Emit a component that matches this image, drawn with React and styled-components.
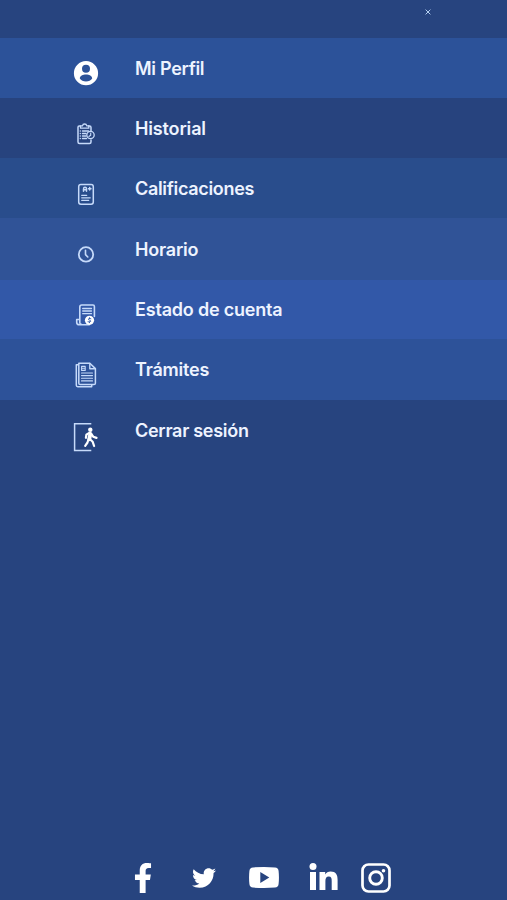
import React from 'react';
import styled, { createGlobalStyle } from 'styled-components';
import { FaFacebookF, FaTwitter } from 'react-icons/fa';


const GlobalStyle = createGlobalStyle`
  body {
    margin: 0;
    background: #27447f;
  }
`;

const Screen = styled.div`
  background: #27447f;
  box-sizing: border-box;
  color: #edf3ff;
  display: flex;
  flex-direction: column;
  font-family: Inter, 'Liberation Sans', sans-serif;
  height: 900px;
  overflow: hidden;
  width: 507px;
`;

const Header = styled.header`
  display: flex;
  flex: none;
  height: 38px;
  justify-content: flex-end;
`;

const CloseButton = styled.button`
  background: none;
  border: none;
  color: #b5cff0;
  height: 6px;
  line-height: 0;
  margin: 9px 76px 0 0;
  padding: 0;
  width: 6px;
`;

const Menu = styled.nav`
  flex: 1;
`;

const MenuItem = styled.a`
  align-items: flex-start;
  background: ${props => props.$color};
  box-sizing: border-box;
  display: flex;
  height: ${props => props.$height}px;
  padding: ${props => props.$top}px 0 0 70px;
`;

const ItemIcon = styled.svg`
  fill: none;
  flex: none;
  height: 32px;
  stroke: #c6dafa;
  stroke-linecap: round;
  stroke-linejoin: round;
  stroke-width: 1.5;
  width: 32px;
`;

const Label = styled.span`
  font-size: 18px;
  font-weight: 600;
  letter-spacing: ${props => props.$spacing}px;
  line-height: 22px;
  margin: ${props => props.$drop}px 0 0 33px;
  white-space: nowrap;
`;

const Footer = styled.footer`
  align-items: center;
  color: #fff;
  display: flex;
  height: 30px;
  margin-bottom: 7px;
  padding-left: 134px;
`;

const SocialLink = styled.a`
  display: flex;
  flex: none;
  justify-content: center;
  margin-right: ${props => props.$gap || 0}px;
  padding-bottom: ${props => props.$lift || 0}px;
  width: ${props => props.$width}px;
  svg {
    flex: none;
  }
`;

const ProfileIcon = () => (
  <ItemIcon viewBox='0 0 32 32'>
    <path
      fill='#fff'
      stroke='none'
      fillRule='evenodd'
      d='M16 4.1a12.1 12.1 0 1 0 0 24.2a12.1 12.1 0 1 0 0-24.2zM16 7.7a4 4 0 1 1 0 8a4 4 0 1 1 0-8zM9.8 21.4c0-2.6 3.2-3.9 6.2-3.9s6.2 1.3 6.2 3.9c-1.3 1.8-3.5 3-6.2 3s-4.9-1.2-6.2-3z'
    />
  </ItemIcon>
);

const HistoryIcon = () => (
  <ItemIcon viewBox='0 0 32 32'>
    <path d='M10.5 9H9.2Q8 9 8 10.3v14.6q0 1.5 1.5 1.5h10q1.5 0 1.5-1.5v-2M21 14v-3.5Q21 9 19.5 9h-1' />
    <path d='M10.5 11.2V8.8h2Q12.8 7 14.6 7t2.2 1.8h2v2.4z' strokeWidth='1.3' />
    <path d='M12.5 14h6M12.5 16.5h3.5M12.5 19h3.5M12.5 21.5h4M10.3 14v.1M10.3 16.5v.1M10.3 19v.1M10.3 21.5v.1' strokeWidth='1.4' />
    <circle cx='20.5' cy='18' r='3.7' strokeWidth='1.3' />
    <path d='M20.7 16v2.2l-1.8 1.3' strokeWidth='1.1' />
  </ItemIcon>
);

const GradesIcon = () => (
  <ItemIcon viewBox='0 0 32 32'>
    <rect x='8.7' y='6.5' width='14.6' height='19.7' rx='2.2' />
    <path d='M13.5 13.2V11q0-1.7 1.5-1.7t1.5 1.7v2.2M13.5 11.7h3M18.4 10.7h2.6M19.7 9.4v2.6' />
    <path d='M11.7 17.3h5M11.7 19.8h8.5M11.7 22.3h7' strokeWidth='1.3' />
  </ItemIcon>
);

const ClockIcon = () => (
  <ItemIcon viewBox='0 0 32 32'>
    <circle cx='16' cy='16.4' r='7.2' strokeWidth='1.8' />
    <path d='M15.5 12.3v4.3l2.3 2.4' strokeWidth='1.6' />
  </ItemIcon>
);

const AccountIcon = () => (
  <ItemIcon viewBox='0 0 32 32'>
    <path d='M9.8 20.5V8q0-2 2-2H23q1.4 0 1.4 1.5v10M9.8 20.5H6.7v2.7q0 2.6 2.6 2.6h10M9.8 20.5v3.3q0 1.6 1.5 1.6' strokeWidth='1.6' />
    <path d='M12.7 9.5h8.8M12.7 12h8.8M12.7 14.7h8.8' strokeWidth='1.3' />
    <circle cx='19.5' cy='21.3' r='4.6' fill='#fff' stroke='none' />
    <path d='M20.9 19.7q-2.6-.9-2.6.4c0 1.3 2.5.8 2.5 2.1q0 1.4-2.8.6M19.5 18.7v.8M19.5 22.9v.8' stroke='#3258a8' strokeWidth='.9' />
  </ItemIcon>
);

const PaperworkIcon = () => (
  <ItemIcon viewBox='0 0 32 32'>
    <path d='M8 5.8H6.3v20.5q0 1.4 1.4 1.4h14v-1.9' />
    <path d='M8.8 4.2h11l5.6 5.4v14.6q0 1.4-1.4 1.4H10.2q-1.4 0-1.4-1.4z' />
    <path d='M19.8 4.4v5.3h5.4' strokeWidth='1.4' />
    <path d='M11.6 7.4h3.6v4h-3.6zM12.5 9.3h1.8' strokeWidth='1.1' />
    <path d='M11.5 14h11M11.5 16.6h11M11.5 19.2h11M11.5 21.9h11' strokeWidth='1.1' />
  </ItemIcon>
);

const LogoutIcon = () => (
  <ItemIcon viewBox='0 0 32 32'>
    <path d='M21.3 2.7H4.6v26.7h16.7' strokeLinecap='butt' strokeLinejoin='miter' />
    <circle cx='20.3' cy='8.7' r='2.2' fill='#fff' stroke='none' />
    <path d='M20.3 13l-1 5.2' stroke='#fff' strokeWidth='3.9' />
    <path
      d='M19.3 11.8l-2.9 1.9-.5 3.1M21.3 13l1.9 2.7 3.3 1.2M19.5 17.8l3.2 3 1.4 4.2M18.4 18.5l-.9 3-2.3 3.3'
      stroke='#fff'
      strokeWidth='2.2'
    />
  </ItemIcon>
);

const YoutubeIcon = () => (
  <svg width='30' height='21' viewBox='0 0 30 21' fill='currentColor'>
    <path
      fillRule='evenodd'
      d='M4 .4Q15-.4 26 .4Q29.3.6 29.6 4Q30.3 10.5 29.6 17Q29.3 20.4 26 20.6Q15 21.4 4 20.6Q.7 20.4.4 17Q-.3 10.5.4 4Q.7.6 4 .4zM11.3 5v11l9-5.5z'
    />
  </svg>
);

const LinkedinIcon = () => (
  <svg width='29' height='27' viewBox='0 0 29 27' fill='currentColor'>
    <circle cx='4' cy='3.5' r='3.5' />
    <path d='M1 9h6v18H1zM10.5 9h5.7v2.5c1-1.8 2.9-2.9 5.4-2.9 5.3 0 7 3.2 7 8.3V27h-5.9v-9c0-2.6-.4-4.4-2.9-4.4-2.6 0-3.4 1.9-3.4 4.4v9h-5.9z' />
  </svg>
);

const InstagramIcon = () => (
  <svg width='30' height='30' viewBox='0 0 30 30' fill='none' stroke='currentColor'>
    <rect x='1.5' y='1.5' width='27' height='27' rx='6' strokeWidth='2.7' />
    <circle cx='15' cy='15' r='6.3' strokeWidth='2.9' />
    <circle cx='22.5' cy='7.7' r='1.8' fill='currentColor' stroke='none' />
  </svg>
);

const items = [
  { label: 'Mi Perfil', icon: ProfileIcon, color: '#2c5299', height: 60, top: 19, drop: 1, spacing: -0.3 },
  { label: 'Historial', icon: HistoryIcon, color: '#27437e', height: 60, top: 19, drop: 1, spacing: -0.15 },
  { label: 'Calificaciones', icon: GradesIcon, color: '#294d8c', height: 60, top: 20, drop: 0, spacing: -0.32 },
  { label: 'Horario', icon: ClockIcon, color: '#305397', height: 62, top: 20, drop: 1, spacing: -0.2 },
  { label: 'Estado de cuenta', icon: AccountIcon, color: '#3258a8', height: 59, top: 19, drop: 0, spacing: -0.2 },
  { label: 'Trámites', icon: PaperworkIcon, color: '#2d5299', height: 61, top: 20, drop: 0, spacing: -0.2 },
  { label: 'Cerrar sesión', icon: LogoutIcon, color: '#27447f', height: 60, top: 21, drop: -1, spacing: -0.28 },
];

const App = () => (
  <Screen>
    <GlobalStyle />
    <Header>
      <CloseButton aria-label='Cerrar'>
        <svg width='6' height='6' viewBox='0 0 6 6' stroke='currentColor'>
          <path d='M.6.6l4.8 4.8M5.4.6L.6 5.4' />
        </svg>
      </CloseButton>
    </Header>
    <Menu>
      {items.map(({ label, icon: Icon, color, height, top, drop, spacing }) => (
        <MenuItem key={label} $color={color} $height={height} $top={top}>
          <Icon />
          <Label $drop={drop} $spacing={spacing}>{label}</Label>
        </MenuItem>
      ))}
    </Menu>
    <Footer>
      <SocialLink $width={17} $gap={41}><FaFacebookF size={30} /></SocialLink>
      <SocialLink $width={23} $gap={34}><FaTwitter size={24} /></SocialLink>
      <SocialLink $width={30} $gap={30} $lift={1}><YoutubeIcon /></SocialLink>
      <SocialLink $width={29} $gap={23} $lift={3}><LinkedinIcon /></SocialLink>
      <SocialLink $width={30}><InstagramIcon /></SocialLink>
    </Footer>
  </Screen>
);


export default App;
